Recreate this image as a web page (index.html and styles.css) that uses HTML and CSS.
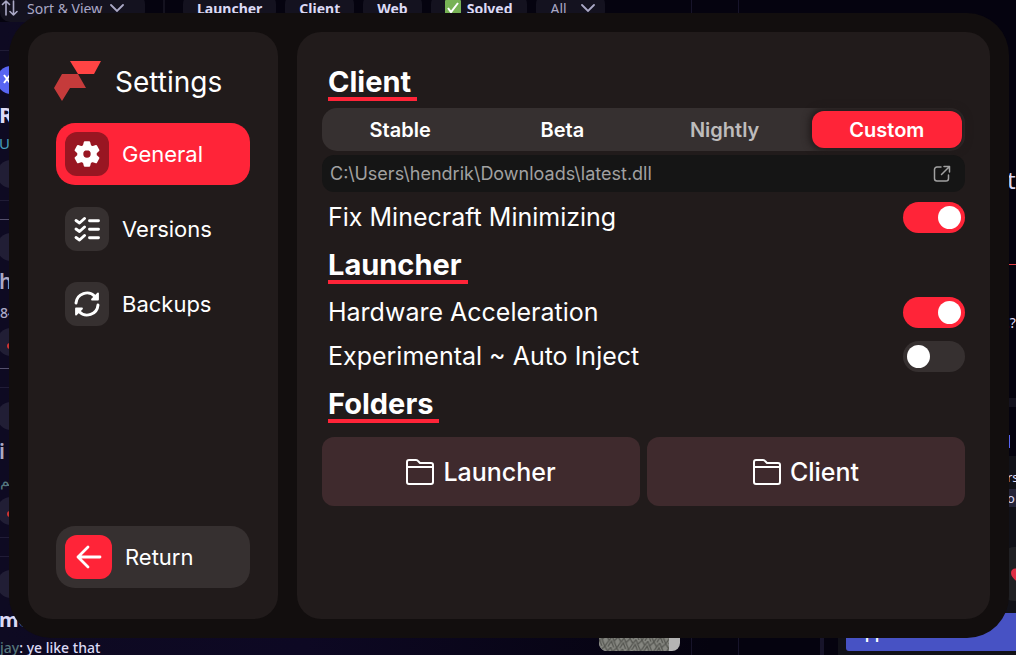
FILE: index.html
```html
<!DOCTYPE html>
<html lang="en">
<head>
<meta charset="utf-8">
<title>Settings</title>
<link rel="stylesheet" href="styles.css">
</head>
<body>
<div class="desktop">
  <div class="filters">
    <span class="pill sort">
      <svg width="18" height="18" viewBox="0 0 18 18" fill="none" stroke="currentColor" stroke-width="1.6" stroke-linecap="round" stroke-linejoin="round"><path d="M5 16V2M1.500 5.500 5 2l3.500 3.500M12.500 2v14M9 12.500l3.500 3.500 3.500-3.500"/></svg>
      Sort &amp; View
      <svg class="chev" width="14" height="8" viewBox="0 0 14 8" fill="none" stroke="currentColor" stroke-width="1.800" stroke-linecap="round"><path d="m1 1 6 6 6-6"/></svg>
    </span>
    <span class="divider"></span>
    <span class="pill">Launcher</span>
    <span class="pill">Client</span>
    <span class="pill">Web</span>
    <span class="pill"><svg width="16" height="16" viewBox="0 0 16 16"><rect width="16" height="16" rx="1" fill="#77b255"/><path d="m3 8 3 4 7-9" fill="none" stroke="#fff" stroke-width="2"/></svg>Solved</span>
    <span class="pill all">All
      <svg class="chev" width="14" height="8" viewBox="0 0 14 8" fill="none" stroke="currentColor" stroke-width="1.800" stroke-linecap="round"><path d="m1 1 6 6 6-6"/></svg>
    </span>
  </div>
  <div class="shape line l1"></div><div class="shape line l2"></div><div class="shape line bright l3"></div>
  <div class="shape line bright l4"></div><div class="shape line l5"></div><div class="shape line l6"></div><div class="shape line l7"></div>
  <div class="shape dot blue"></div>
  <svg class="shape blue-mark" width="8" height="12" viewBox="0 0 8 12" fill="none" stroke="#fff" stroke-width="2"><path d="m1 2 6 8M7 2 1 10"/></svg>
  <div class="shape dot d1"></div><div class="shape dot d2"></div><div class="shape dot d3"></div>
  <div class="shape dot d4"></div><div class="shape dot d5"></div><div class="shape dot d6"></div>
  <div class="shape red r1"></div><div class="shape red r2"></div>
  <span class="shape t-r">R</span><span class="shape t-u">U</span><span class="shape t-h">h</span>
  <span class="shape t-8">84</span><span class="shape t-i">i</span><span class="shape t-arab">ـم</span>
  <span class="shape t-mo">mo</span>
  <span class="shape t-jay"><em>jay</em>: ye like that</span>
  <svg class="shape photo" width="81" height="50" viewBox="0 0 81 50"><defs><pattern id="stone" width="12" height="11" patternUnits="userSpaceOnUse" patternTransform="rotate(8)"><rect width="12" height="11" fill="#858680"/><path d="m0 11 6-11 6 11M3 11l3-6 3 6M0 0l4 5M12 0 8 5" fill="none" stroke="#555651" stroke-width="1.300"/></pattern></defs><rect width="81" height="50" rx="8" fill="#b4b4b4"/><path d="M0 0h70v50H8a8 8 0 0 1-8-8z" fill="url(#stone)"/></svg>
  <div class="shape v1"></div><div class="shape v2"></div><div class="shape v3"></div>
  <div class="shape right-card"></div>
  <div class="shape apps">Apps</div>
  <div class="shape red-line"></div>
  <div class="shape right-band"></div>
  <div class="shape right-chip"></div>
  <div class="shape blue-tick"></div>
  <span class="shape t-t">t</span><span class="shape t-q">.?</span><span class="shape t-rs">rs</span><span class="shape t-o">o</span>
  <div class="shape heart-bg"></div>
  <svg class="shape heart" width="16" height="16" viewBox="0 0 16 16"><path d="M8 15C4 12 0 9 0 5c0-5 6-6 8-2 2-4 8-3 8 2 0 4-4 7-8 10z" fill="#dd2e44"/></svg>
</div>

<div class="window">
  <nav class="sidebar" aria-label="Settings">
    <header class="brand">
      <svg width="48" height="42" viewBox="0 0 48 42"><path d="M16 1h31l-7 13H24z" fill="#ff4444"/><path d="M8 14h16l8 14H16L8 41 0 28z" fill="#c53b3b"/></svg>
      <h1>Settings</h1>
    </header>
    <button class="nav active" type="button">
      <span class="tile"><svg width="26" height="26" viewBox="0 0 26 26"><path fill="#fff" stroke="#fff" stroke-width="2" stroke-linejoin="round" fill-rule="evenodd" d="M10.800 1.300h4.400l1 3.600a8.500 8.500 0 0 1 2.300 1.300L22.100 5l2.300 4.200-2.700 2.700a8.500 8.500 0 0 1 0 2.500l2.700 2.600-2.300 4.200-3.700-1.200a8.500 8.500 0 0 1-2.300 1.300l-.9 3.500h-4.400l-.9-3.500a8.500 8.500 0 0 1-2.300-1.300l-3.700 1.200L1.600 17l2.700-2.600a8.500 8.500 0 0 1 0-2.500L1.600 9.200 3.900 5l3.600 1.200a8.500 8.500 0 0 1 2.300-1.300zM13 8.300a4.700 4.700 0 1 0 0 9.400 4.700 4.700 0 0 0 0-9.400z"/></svg></span>
      General
    </button>
    <button class="nav" type="button">
      <span class="tile"><svg width="26" height="26" viewBox="0 0 26 26" fill="none" stroke="#fff" stroke-width="2.900" stroke-linecap="round" stroke-linejoin="round"><path d="m2 4.500 3.500 2.500L10.500 2.500M2 13l3.500 2.500L10.500 11M2 21.500 5.500 24l5-4.500M15.500 4.700h9M15.500 13.200h9M15.500 21.700h9"/></svg></span>
      Versions
    </button>
    <button class="nav" type="button">
      <span class="tile"><svg width="26" height="26" viewBox="0 0 26 26" fill="none" stroke="#fff" stroke-width="2.900" stroke-linecap="round"><path d="M2 12A11 11 0 0 1 21 5.500M24 14A11 11 0 0 1 5 20.500"/><path d="M24 2.500v6h-6zM2 23.500v-6h6z" fill="#fff" stroke-width="1.800" stroke-linejoin="round"/></svg></span>
      Backups
    </button>
    <button class="nav return" type="button">
      <span class="tile"><svg width="28" height="24" viewBox="0 0 28 24" fill="none" stroke="#fff" stroke-width="2.800" stroke-linecap="round" stroke-linejoin="round"><path d="M25 12H3M13 2 3 12l10 10"/></svg></span>
      Return
    </button>
  </nav>

  <main class="panel">
    <h2>Client</h2>
    <div class="tabs" role="group" aria-label="Client version">
      <button type="button">Stable</button>
      <button type="button">Beta</button>
      <button type="button" class="dim">Nightly</button>
      <button type="button" class="selected" aria-pressed="true">Custom</button>
    </div>
    <div class="path">
      <input type="text" aria-label="Custom file path" value="C:\Users\hendrik\Downloads\latest.dll" readonly>
      <button type="button" aria-label="Browse"><svg width="18" height="18" viewBox="0 0 18 18" fill="none" stroke="currentColor" stroke-width="1.500" stroke-linecap="round" stroke-linejoin="round"><path d="M8 2H4a2.500 2.500 0 0 0-2.500 2.500v9A2.500 2.500 0 0 0 4 16h9a2.500 2.500 0 0 0 2.500-2.500V10M11 1.500h5.500V7M16 2 8.500 9.500"/></svg></button>
    </div>
    <div class="row first"><label for="fix">Fix Minecraft Minimizing</label><input id="fix" type="checkbox" checked></div>
    <h2>Launcher</h2>
    <div class="row"><label for="hw">Hardware Acceleration</label><input id="hw" type="checkbox" checked></div>
    <div class="row"><label for="inject">Experimental ~ Auto Inject</label><input id="inject" type="checkbox"></div>
    <h2>Folders</h2>
    <div class="folders">
      <button type="button"><svg width="28" height="26" viewBox="0 0 28 26" fill="none" stroke="#fff" stroke-width="2" stroke-linejoin="round"><path d="M1 23V3a2 2 0 0 1 2-2h7q1.500 0 2.500 1.500L14 4h11a2 2 0 0 1 2 2v17a2 2 0 0 1-2 2H3a2 2 0 0 1-2-2zM1 8h26"/></svg>Launcher</button>
      <button type="button"><svg width="28" height="26" viewBox="0 0 28 26" fill="none" stroke="#fff" stroke-width="2" stroke-linejoin="round"><path d="M1 23V3a2 2 0 0 1 2-2h7q1.500 0 2.500 1.500L14 4h11a2 2 0 0 1 2 2v17a2 2 0 0 1-2 2H3a2 2 0 0 1-2-2zM1 8h26"/></svg>Client</button>
    </div>
  </main>
</div>
</body>
</html>
```
FILE: styles.css
```css
* { box-sizing: border-box; }
body {
  margin: 0;
  min-height: 100vh;
  padding: 13px 7px 17px 9px;
  display: flex;
  position: relative;
  background: #05030f;
  color: #fff;
  font-family: Inter, "Liberation Sans", sans-serif;
}
button, input { font: inherit; color: inherit; border: 0; margin: 0; padding: 0; background: none; }
h1, h2 { margin: 0; }
svg { display: block; flex: none; }

/* Settings window */
.window {
  position: relative;
  flex: 1;
  display: grid;
  grid-template-columns: 250px 1fr;
  gap: 19px;
  padding: 19px;
  border-radius: 42px;
  background: #120e0e;
}
.sidebar, .panel { border-radius: 24px; background: #211b1b; display: flex; flex-direction: column; }
.sidebar { padding: 28px 28px 31px; gap: 13px; }
.brand { display: flex; gap: 13px; height: 50px; align-items: flex-start; margin-left: -2px; }
.brand h1 { font-size: 28px; line-height: 44px; font-weight: 400; }
.nav {
  display: flex;
  align-items: center;
  gap: 13px;
  height: 62px;
  padding: 0 9px;
  border-radius: 19px;
  font-size: 22px;
  text-align: left;
}
.tile {
  width: 44px;
  height: 44px;
  border-radius: 12px;
  background: #363030;
  display: grid;
  place-items: center;
}
.active { background: #ff2438; }
.active .tile { background: #991622; }
.return { margin-top: auto; background: #363030; }
.return .tile { width: 47px; background: #ff2438; }

.panel { padding: 33px 25px 25px 25px; }
.panel h2 {
  align-self: flex-start;
  margin: 17px 0 0 6px;
  padding-right: 6px;
  border-bottom: 4px solid #ff2438;
  font-size: 29px;
  line-height: 30px;
  font-weight: 700;
}
.panel h2:first-child { margin-top: 2px; }
.tabs {
  margin-top: 7px;
  display: grid;
  grid-template-columns: repeat(4, 1fr);
  gap: 12px;
  height: 43px;
  padding: 3px;
  border-radius: 15px;
  background: #363030;
}
.tabs button { font-size: 20px; font-weight: 600; border-radius: 12px; }
.tabs .dim { color: #bebcbc; }
.tabs .selected { background: #ff2438; box-shadow: 0 0 7px 3px #211b1b; }
.path {
  margin-top: 4px;
  display: flex;
  align-items: center;
  height: 37px;
  padding: 0 14px 0 8px;
  border-radius: 12px;
  background: #151515;
  color: #a1a1a1;
}
.path input { flex: 1; min-width: 0; font-size: 18px; outline: 0; }
.row { display: flex; justify-content: space-between; align-items: center; margin-top: 13px; padding-left: 6px; font-size: 25px; line-height: 31px; }
.row.first { margin-top: 10px; }
.row input {
  appearance: none;
  width: 62px;
  height: 31px;
  padding: 4px;
  border-radius: 16px;
  background: #363030;
  display: flex;
  align-items: center;
}
.row input::before { content: ""; width: 23px; height: 23px; border-radius: 50%; background: #fff; }
.row input:checked { background: #ff2438; justify-content: flex-end; }
.folders { margin-top: 14px; display: grid; grid-template-columns: 1fr 1fr; gap: 7px; }
.folders button {
  display: flex;
  align-items: center;
  justify-content: center;
  gap: 9px;
  height: 69px;
  border-radius: 12px;
  background: #3f2a2d;
  font-size: 25px;
  font-weight: 500;
}

/* Desktop behind the window */
.desktop {
  position: absolute;
  inset: 0;
  overflow: hidden;
  background: linear-gradient(90deg, #0e0a22, #0d0823 30%, #05030f 70%);
  color: #dcdaf5;
  font-family: "Noto Sans", sans-serif;
  white-space: nowrap;
}
.shape { position: absolute; }
.filters { display: flex; gap: 9px; height: 28px; margin-top: -6px; background: #05030f; }
.pill { display: flex; align-items: center; gap: 6px; padding: 0 14px; border-radius: 10px; background: #14121f; font-size: 14px; font-weight: 700; }
.pill.sort { width: 145px; padding: 0 0 0 1px; gap: 8px; color: #aba9c6; font-weight: 400; }
.pill.all { gap: 14px; padding: 0 10px 0 15px; color: #aba9c6; font-weight: 400; }
.divider { width: 2px; margin: 0 9px; background: #14121f; }
.line { left: 0; width: 9px; height: 1px; background: #201c36; }
.bright { background: #55516d; }
.l1 { top: 50px; } .l2 { top: 200px; } .l3 { top: 219px; } .l4 { top: 368px; } .l5 { top: 387px; } .l6 { top: 537px; } .l7 { top: 556px; }
.dot { left: -3px; width: 28px; height: 28px; border-radius: 14px; background: #211e35; }
.blue { top: 66px; background: #5865f2; }
.blue-mark { left: 3px; top: 73px; }
.d1 { top: 160px; } .d2 { top: 233px; } .d3 { top: 328px; } .d4 { top: 402px; } .d5 { top: 497px; } .d6 { top: 570px; }
.red { left: 7px; width: 6px; height: 6px; border-radius: 3px; background: #c33; }
.r1 { top: 343px; } .r2 { top: 511px; }
.t-r { left: -1px; top: 99px; font-size: 22px; font-weight: 700; }
.t-u { left: -1px; top: 133px; font-size: 15px; color: #469dbb; }
.t-h { left: -1px; top: 267px; font-size: 21px; font-weight: 600; color: #aba9c6; }
.t-8 { left: 0; top: 303px; font-size: 14px; font-weight: 500; color: #aba9c6; }
.t-i { left: -1px; top: 437px; font-size: 21px; font-weight: 600; color: #aba9c6; }
.t-arab { left: 0; top: 470px; font-size: 15px; color: #55777c; }
.t-mo { left: -1px; top: 606px; font-size: 20px; font-weight: 700; }
.t-jay { left: 0; top: 638px; font-size: 14px; line-height: 20px; font-weight: 500; }
.t-jay em { font-style: normal; color: #55777c; }
.photo { left: 599px; top: 601px; }
.v1, .v2, .v3 { top: 0; bottom: 0; width: 1px; background: #17142a; }
.v1 { left: 691px; } .v2 { left: 738px; } .v3 { left: 820px; top: 630px; width: 4px; }
.right-card { left: 838px; right: 0; top: 456px; bottom: 0; background: #111118; }
.apps { left: 846px; right: -9px; top: 613px; height: 38px; border-radius: 3px; background: #4752c4; color: #fff; font-size: 16px; line-height: 38px; padding-left: 8px; font-weight: 600; }
.red-line { left: 1009px; right: 0; top: 264px; height: 1px; background: #e03a42; }
.right-band { left: 1009px; right: 0; top: 398px; height: 9px; background: #14121f; }
.right-chip { left: 1009px; right: 0; top: 489px; height: 18px; background: #252439; }
.blue-tick { left: 1009px; top: 435px; width: 1px; height: 13px; background: #5865f2; }
.t-t { left: 1007px; top: 163px; font-size: 24px; }
.t-q { left: 1006px; top: 313px; font-size: 14px; }
.t-rs { left: 1007px; top: 468px; font-size: 13px; }
.t-o { left: 1007px; top: 489px; font-size: 13px; }
.heart-bg { left: 1002px; top: 547px; width: 30px; height: 54px; border-radius: 12px; background: #202024; }
.heart { left: 1011px; top: 568px; }
```
